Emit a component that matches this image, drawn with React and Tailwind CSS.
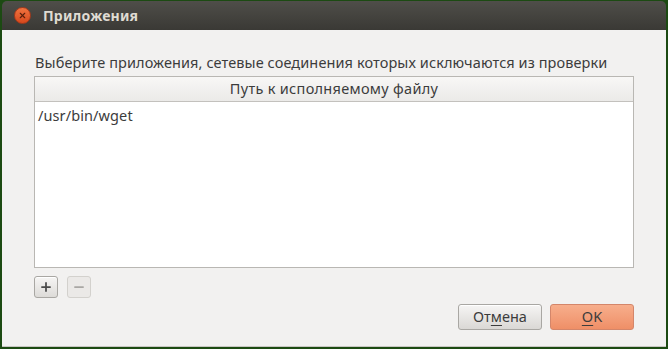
import { Plus, Minus, X } from "lucide-react"

const font = { fontFamily: '"Noto Sans", "DejaVu Sans", sans-serif' }

export default function App() {
  return (
    <div className="w-[668px] h-[349px] bg-[#1c4a12] p-[2px] pt-[1px]" style={font}>
      <div className="w-full h-full flex flex-col rounded-t-[5px] overflow-hidden">
        {/* Title bar */}
        <div className="h-[29px] flex items-center bg-gradient-to-b from-[#4f4e49] to-[#3a3935] pl-[12px]">
          <div className="w-[17px] h-[17px] rounded-full bg-gradient-to-b from-[#f0733f] to-[#d6481c] border border-[#a8391a] flex items-center justify-center">
            <X size={9} strokeWidth={3} className="text-[#5a200c]" />
          </div>
          <span className="ml-[12px] text-[14px] font-bold text-[#dfdbd2] tracking-[0.2px]">Приложения</span>
        </div>

        {/* Body */}
        <div className="flex-1 bg-[#f2f1f0] flex flex-col px-[32px] pt-[22px] pb-[16px] border-b border-[#c8c6c2]">
          <p className="text-[14.5px] text-[#3c3c3c] leading-[20px] pl-[1px] tracking-[0.1px] whitespace-nowrap">
            Выберите приложения, сетевые соединения которых исключаются из проверки
          </p>
          <div className="mt-[4px] h-[192px] border border-[#b9b7b3] bg-white flex flex-col">
            <div className="h-[25px] flex items-center justify-center border-b border-[#c3c1bd] bg-gradient-to-b from-[#f8f7f6] to-[#ebeae8] text-[14.5px] text-[#3c3c3c] tracking-[0.3px]">
              Путь к исполняемому файлу
            </div>
            <div className="px-[3px] pt-[1px] text-[14.5px] text-[#3c3c3c] leading-[24px] tracking-[0.1px]">/usr/bin/wget</div>
          </div>
          <div className="mt-[8px] flex gap-[9px]">
            <button className="w-[24px] h-[22px] rounded-[3px] border border-[#a9a7a3] bg-gradient-to-b from-[#f6f5f4] to-[#dddbd8] flex items-center justify-center shadow-[inset_0_1px_0_#fff]">
              <Plus size={14} strokeWidth={3} className="text-[#4a4a4a]" />
            </button>
            <button className="w-[24px] h-[22px] rounded-[3px] border border-[#d3d1cd] bg-[#ebe9e7] flex items-center justify-center">
              <Minus size={14} strokeWidth={3} className="text-[#a9a7a4]" />
            </button>
          </div>
          <div className="mt-auto flex justify-end gap-[8px]">
            <button className="w-[84px] h-[26px] rounded-[3px] border border-[#a9a7a3] bg-gradient-to-b from-[#f6f5f4] to-[#dad8d5] text-[14.5px] text-[#3c3c3c] shadow-[inset_0_1px_0_#fff]">
              От<span className="underline underline-offset-[3px]">м</span>ена
            </button>
            <button className="w-[84px] h-[26px] rounded-[3px] border border-[#d4866a] bg-gradient-to-b from-[#f7ae8c] to-[#ef8f67] text-[14.5px] text-[#3c3c3c]">
              <span className="underline underline-offset-[3px]">O</span>K
            </button>
          </div>
        </div>
      </div>
    </div>
  )
}
